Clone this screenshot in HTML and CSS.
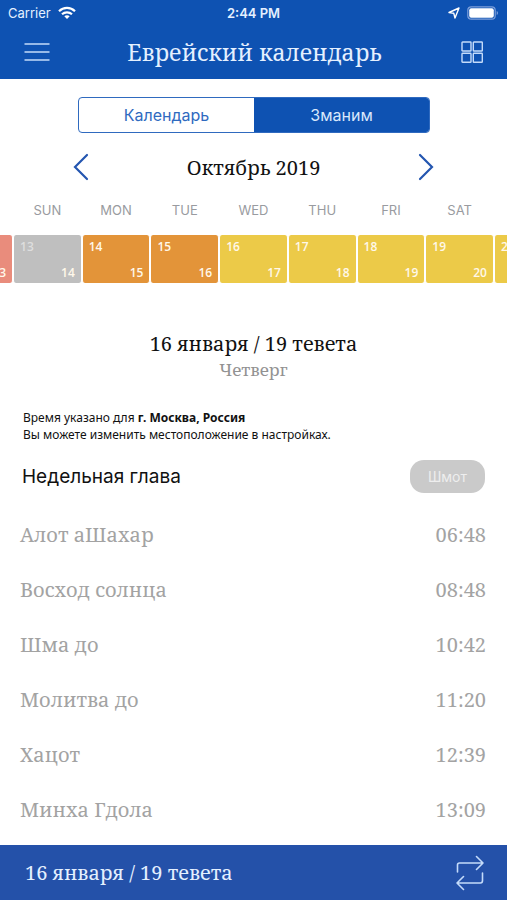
FILE: index.html
```html
<!DOCTYPE html>
<html lang="ru">
<head>
<meta charset="utf-8">
<meta name="viewport" content="width=device-width, initial-scale=1">
<title>Еврейский календарь</title>
<link rel="stylesheet" href="styles.css">
</head>
<body>
<div class="app">
  <header class="header">
    <div class="status">
      <div class="status-left">
        <span>Carrier</span>
        <svg width="18" height="14" viewBox="0 0 18 14" fill="none" stroke="#fff" stroke-width="2.2" aria-hidden="true">
          <path d="M1 5.2C5.500 .8 12.500 .8 17 5.200M4 8.300C6.800 5.700 11.200 5.700 14 8.300"/>
          <path d="M9 13 6.300 10.300C7.800 9 10.200 9 11.700 10.300Z" fill="#fff" stroke="none"/>
        </svg>
      </div>
      <span class="clock">2:44 PM</span>
      <div class="status-right">
        <svg width="12" height="12" viewBox="0 0 12 12" fill="none" stroke="#fff" stroke-width="1.4" stroke-linejoin="round" aria-hidden="true">
          <path d="M11 1 7 11 5.800 6.300 1 5.500Z"/>
        </svg>
        <svg width="32" height="14" viewBox="0 0 32 14" aria-hidden="true">
          <rect x=".8" y=".8" width="27.400" height="12.400" rx="3.500" fill="none" stroke="#7d9fda" stroke-width="1.200"/>
          <rect x="2.200" y="2.200" width="24.600" height="9.600" rx="2" fill="#fff"/>
          <path d="M29.700 5V9Q31 8.500 31 7T29.700 5Z" fill="#7d9fda"/>
        </svg>
      </div>
    </div>
    <div class="titlebar">
      <button class="icon-button" type="button" aria-label="Меню">
        <svg width="26" height="20" viewBox="0 0 26 20" stroke="#c4dbfa" stroke-width="1.500" aria-hidden="true">
          <path d="M.5 2H25.500M.5 10H25.500M.5 18H25.500"/>
        </svg>
      </button>
      <h1 class="title">Еврейский календарь</h1>
      <button class="icon-button" type="button" aria-label="Разделы">
        <svg width="26" height="22" viewBox="-2 0 26 22" fill="none" stroke="#c4dbfa" stroke-width="1.400" aria-hidden="true">
          <rect x="1" y="1" width="9" height="9" rx=".6"/><rect x="12.300" y="1" width="9" height="9" rx=".6"/>
          <rect x="1" y="12.300" width="9" height="9" rx=".6"/><rect x="12.300" y="12.300" width="9" height="9" rx=".6"/>
        </svg>
      </button>
    </div>
  </header>

  <main class="main">
    <div class="tabs">
      <button class="tab" type="button">Календарь</button>
      <button class="tab tab-active" type="button">Зманим</button>
    </div>

    <div class="month">
      <button class="icon-button" type="button" aria-label="Предыдущий месяц">
        <svg width="16" height="28" viewBox="0 0 16 28" fill="none" stroke="#2456b0" stroke-width="2.200" stroke-linecap="round" aria-hidden="true"><path d="M14 2 2 14 14 26"/></svg>
      </button>
      <h2 class="month-name">Октябрь 2019</h2>
      <button class="icon-button" type="button" aria-label="Следующий месяц">
        <svg width="16" height="28" viewBox="0 0 16 28" fill="none" stroke="#2456b0" stroke-width="2.200" stroke-linecap="round" aria-hidden="true"><path d="M2 2 14 14 2 26"/></svg>
      </button>
    </div>

    <div class="weekdays">
      <span>SUN</span><span>MON</span><span>TUE</span><span>WED</span><span>THU</span><span>FRI</span><span>SAT</span>
    </div>
    <div class="days">
      <div class="day red"><span class="hebrew">13</span></div>
      <div class="day gray"><span class="civil">13</span><span class="hebrew">14</span></div>
      <div class="day orange"><span class="civil">14</span><span class="hebrew">15</span></div>
      <div class="day orange"><span class="civil">15</span><span class="hebrew">16</span></div>
      <div class="day yellow"><span class="civil">16</span><span class="hebrew">17</span></div>
      <div class="day yellow"><span class="civil">17</span><span class="hebrew">18</span></div>
      <div class="day yellow"><span class="civil">18</span><span class="hebrew">19</span></div>
      <div class="day yellow"><span class="civil">19</span><span class="hebrew">20</span></div>
      <div class="day yellow"><span class="civil">20</span></div>
    </div>

    <section class="date">
      <h2 class="date-name">16 января / 19 тевета</h2>
      <p class="date-weekday">Четверг</p>
    </section>

    <p class="location">Время указано для <b>г. Москва, Россия</b><br>Вы можете изменить местоположение в настройках.</p>

    <div class="chapter">
      <h3 class="chapter-name">Недельная глава</h3>
      <button class="pill" type="button">Шмот</button>
    </div>

    <dl class="times">
      <div class="row"><dt>Алот аШахар</dt><dd>06:48</dd></div>
      <div class="row"><dt>Восход солнца</dt><dd>08:48</dd></div>
      <div class="row"><dt>Шма до</dt><dd>10:42</dd></div>
      <div class="row"><dt>Молитва до</dt><dd>11:20</dd></div>
      <div class="row"><dt>Хацот</dt><dd>12:39</dd></div>
      <div class="row"><dt>Минха Гдола</dt><dd>13:09</dd></div>
    </dl>
  </main>

  <footer class="footer">
    <span>16 января / 19 тевета</span>
    <button class="icon-button" type="button" aria-label="Конвертер дат">
      <svg width="28" height="36" viewBox="0 0 28 36" fill="none" stroke="#c4dbfa" stroke-width="1.600" stroke-linecap="round" stroke-linejoin="round" aria-hidden="true">
        <path d="M1.500 17V10Q1.500 8 3.500 8H27M20.500 1.500 27 8 20.500 14.500M26.500 18V25.500Q26.500 28 24.500 28H1M7.500 21.500 1 28 7.500 34.500"/>
      </svg>
    </button>
  </footer>
</div>
</body>
</html>
```
FILE: styles.css
```css
* {
  box-sizing: border-box;
}

body {
  margin: 0;
  background: #fff;
  color: #111;
  font-family: Inter, "Liberation Sans", sans-serif;
}

h1, h2, h3, p, dl, dd {
  margin: 0;
  font-weight: 400;
}

button {
  padding: 0;
  border: 0;
  background: none;
  font: inherit;
  color: inherit;
}

svg {
  display: block;
}

.app {
  display: flex;
  flex-direction: column;
  min-height: 100vh;
}

.header {
  height: 79px;
  background: #0e52b2;
  color: #e4f0ff;
}

.status {
  display: grid;
  grid-template-columns: 1fr auto 1fr;
  align-items: center;
  height: 26px;
  padding: 0 8px;
  font-size: 13px;
}

.status-left,
.status-right {
  display: flex;
  align-items: center;
  gap: 7px;
}

.status-right {
  justify-content: flex-end;
}

.clock {
  font-weight: 600;
}

.titlebar {
  display: flex;
  align-items: center;
  justify-content: space-between;
  height: 51px;
  padding: 0 22px 0 24px;
}

.title,
.month-name,
.date,
.times,
.footer {
  font-family: "Noto Serif", "DejaVu Serif Condensed", "DejaVu Serif", serif;
}

.title {
  font-size: 23px;
}

.main {
  flex: 1;
  padding-top: 18px;
}

.tabs {
  display: flex;
  height: 36px;
  margin: 0 77px 0 78px;
  border: 1px solid #2f6abf;
  border-radius: 4px;
  overflow: hidden;
}

.tab {
  flex: 1;
  color: #2f6abf;
  font-size: 16px;
}

.tab-active {
  background: #0e52b2;
  color: #d9e8fc;
}

.month {
  display: flex;
  align-items: center;
  justify-content: space-between;
  height: 68px;
  padding: 0 73px;
}

.month-name,
.date-name {
  font-size: 20px;
}

.weekdays {
  display: grid;
  grid-template-columns: repeat(7, 1fr);
  height: 34px;
  padding: 0 13px;
  line-height: 18px;
  color: #999ba0;
  font-size: 13px;
  text-align: center;
}

.days {
  display: flex;
  justify-content: center;
  overflow: hidden;
}

.day {
  display: flex;
  flex: 0 0 calc((100% - 26px) / 7);
  flex-direction: column;
  height: 48px;
  padding: 3px 6px 2px;
  border: solid #fff;
  border-width: 0 1px;
  border-radius: 3px;
  color: #fff8ea;
  font: 600 12px/17px "Open Sans", sans-serif;
}

.hebrew {
  margin-top: auto;
  text-align: right;
}

.red {
  background: #e98c7c;
}

.gray {
  background: #bfbfbf;
}

.gray .civil {
  color: #dedede;
}

.orange {
  background: #e39439;
}

.yellow {
  background: #ecca48;
}

.date {
  padding-top: 47px;
  text-align: center;
}

.date-name {
  line-height: 28px;
}

.date-weekday {
  color: #929292;
  font-size: 17px;
  line-height: 24px;
}

.location {
  padding: 27px 23px 0;
  font: 12px/17px "Noto Sans", "Open Sans", sans-serif;
}

.chapter {
  display: flex;
  align-items: center;
  justify-content: space-between;
  padding: 17px 22px 14px;
}

.chapter-name {
  font-size: 19px;
}

.pill {
  width: 75px;
  height: 33px;
  border-radius: 14px;
  background: #cacaca;
  color: #eee;
  font-size: 14px;
}

.times {
  padding: 0 21px 0 20px;
  color: #a3a3a3;
  font-size: 20px;
}

.row {
  display: flex;
  align-items: center;
  justify-content: space-between;
  height: 55px;
}

.footer {
  display: flex;
  align-items: center;
  justify-content: space-between;
  height: 55px;
  padding: 0 23px 0 25px;
  background: #2451a9;
  color: #e4f0ff;
  font-size: 20px;
}
```
